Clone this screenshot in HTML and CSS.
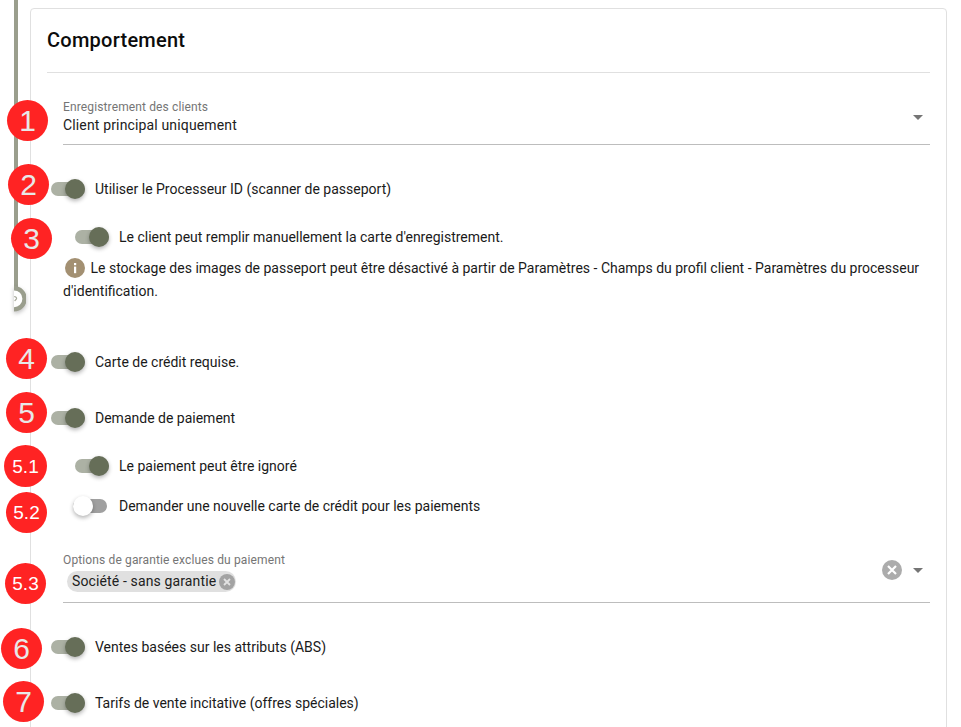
FILE: index.html
```html
<!DOCTYPE html>
<html lang="fr">
<head>
<meta charset="utf-8">
<title>Comportement</title>
<link rel="stylesheet" href="styles.css">
</head>
<body>
<div class="page">
  <div class="timeline"></div>
  <svg class="timeline-node" viewBox="0 0 12 26" width="12" height="26"><path d="M0 2.2a10.4 10.4 0 0 1 0 21.2" fill="#fff" stroke="#9a9e8d" stroke-width="4.4"/><path d="M0.2 10.6a2 2 0 0 1 2.4 1.6c0 1.4-1.4 1.6-1.8 3" fill="none" stroke="#a8ab9d" stroke-width="1.2"/></svg>

  <section class="card">
    <h2 class="title">Comportement</h2>

    <div class="field field-select">
      <div class="field-text">
        <div class="field-label">Enregistrement des clients</div>
        <div class="field-value">Client principal uniquement</div>
      </div>
      <span class="arrow"></span>
    </div>

    <label class="row row-a"><span class="switch on"><span class="thumb"></span></span><span>Utiliser le Processeur ID (scanner de passeport)</span></label>
    <label class="row row-b nested"><span class="switch on"><span class="thumb"></span></span><span>Le client peut remplir manuellement la carte d'enregistrement.</span></label>

    <p class="info">
      <svg class="info-icon" viewBox="0 0 20 20" width="20" height="20"><circle cx="10" cy="10" r="10" fill="#a39072"/><rect x="9" y="8.6" width="2.2" height="6.6" fill="#fff"/><rect x="9" y="5" width="2.2" height="2.2" fill="#fff"/></svg>
      Le stockage des images de passeport peut être désactivé à partir de Paramètres - Champs du profil client - Paramètres du processeur d'identification.
    </p>

    <label class="row row-c"><span class="switch on"><span class="thumb"></span></span><span>Carte de crédit requise.</span></label>
    <label class="row row-d"><span class="switch on"><span class="thumb"></span></span><span>Demande de paiement</span></label>
    <label class="row row-e nested"><span class="switch on"><span class="thumb"></span></span><span>Le paiement peut être ignoré</span></label>
    <label class="row row-f nested"><span class="switch"><span class="thumb"></span></span><span>Demander une nouvelle carte de crédit pour les paiements</span></label>

    <div class="field field-chips">
      <div class="field-text">
        <div class="field-label">Options de garantie exclues du paiement</div>
        <div class="chip">Société - sans garantie
          <svg class="chip-x" viewBox="0 0 16 16" width="16" height="16"><circle cx="8" cy="8" r="8" fill="#a3a3a3"/><path d="M5 5l6 6M11 5l-6 6" stroke="#e3e3e3" stroke-width="1.8"/></svg>
        </div>
      </div>
      <svg class="clear" viewBox="0 0 20 20" width="20" height="20"><circle cx="10" cy="10" r="10" fill="#acacac"/><path d="M6 6l8 8M14 6l-8 8" stroke="#fff" stroke-width="2.2"/></svg>
      <span class="arrow"></span>
    </div>

    <label class="row row-g"><span class="switch on"><span class="thumb"></span></span><span>Ventes basées sur les attributs (ABS)</span></label>
    <label class="row row-h"><span class="switch on"><span class="thumb"></span></span><span>Tarifs de vente incitative (offres spéciales)</span></label>
  </section>

  <span class="badge b1">1</span>
  <span class="badge b2">2</span>
  <span class="badge b3">3</span>
  <span class="badge b4">4</span>
  <span class="badge b5">5</span>
  <span class="badge small b51">5.1</span>
  <span class="badge small b52">5.2</span>
  <span class="badge small b53">5.3</span>
  <span class="badge b6">6</span>
  <span class="badge b7">7</span>
</div>
</body>
</html>
```

FILE: styles.css
```css
* { box-sizing: border-box; }
html, body { margin: 0; height: 100%; overflow: hidden; background: #fff; }
body { font-family: Roboto, "Liberation Sans", sans-serif; color: #1a1a1a; font-size: 14px; }

.page { position: relative; height: 727px; overflow: hidden; padding: 8px 14px 0 30px; }

.card {
  background: #fff;
  border: 1px solid #e0e0e0;
  border-radius: 4px;
  padding: 16px 16px 0;
  height: 760px;
}

.title {
  margin: 0;
  font-size: 20px;
  font-weight: 500;
  letter-spacing: .25px;
  line-height: 30px;
  height: 48px;
  color: #0c0c0c;
  border-bottom: 1px solid #e0e0e0;
}

.field {
  display: flex;
  align-items: flex-start;
  margin-left: 16px;
  border-bottom: 1px solid #bdbdbd;
}
.field-text { flex: 1; }
.field-select { margin-top: 26px; height: 46px; padding: 1px 7px 0 0; }
.field-label { font-size: 12px; line-height: 14px; letter-spacing: .13px; color: #757575; }
.field-value { font-size: 14px; line-height: 20px; margin-top: 1px; letter-spacing: .15px; color: #212121; }
.field-select .arrow { margin-top: 15px; }

.arrow {
  width: 0;
  height: 0;
  border-left: 5px solid transparent;
  border-right: 5px solid transparent;
  border-top: 5px solid #757575;
}

.row { display: flex; align-items: center; height: 24px; line-height: 24px; color: #1a1a1a; }
.nested { padding-left: 24px; }
.switch { position: relative; flex: none; width: 34px; height: 14px; margin: 0 12px 0 2px; border-radius: 7px; background: #a0a0a0; }
.switch.on { margin: 0 10px 0 4px; background: #acb1a4; }
.thumb {
  position: absolute;
  top: -3px;
  left: 0;
  width: 20px;
  height: 20px;
  border-radius: 50%;
  background: #fff;
  box-shadow: 0 2px 4px rgba(0, 0, 0, .3);
}
.switch.on .thumb { left: 14px; background: #666e58; }

.row-a { margin-top: 32px; }
.row-b { margin-top: 24px; }
.row-c { margin-top: 47px; }
.row-d { margin-top: 32px; }
.row-e { margin-top: 24px; }
.row-f { margin-top: 16px; }
.row-g { margin-top: 32px; }
.row-h { margin-top: 32px; }

.info { margin: 8px 0 0 16px; line-height: 23px; color: #1a1a1a; padding-right: 4px; height: 46px; }
.info-icon { vertical-align: -5px; margin: 0 2px 0 2px; }

.field-chips { margin-top: 33px; height: 52px; padding: 2px 7px 0 0; }
.chip {
  display: inline-flex;
  align-items: center;
  height: 21px;
  margin: 4px 0 0 4px;
  padding: 0 1px 0 5px;
  border-radius: 11px;
  background: #e0e0e0;
  color: #212121;
  letter-spacing: .13px;
  line-height: 21px;
}
.chip-x { margin-left: 3px; }
.clear { margin: 7px 11px 0 0; }
.field-chips .arrow { margin-top: 15px; }

.timeline { position: absolute; left: 14px; top: 0; width: 4px; height: 290px; background: #9a9e8d; }
.timeline-node {
  position: absolute;
  left: 14px;
  top: 286px;
  filter: drop-shadow(0 2px 2px rgba(0, 0, 0, .25));
}

.badge {
  position: absolute;
  width: 41px;
  height: 41px;
  border-radius: 50%;
  background: #ff2323;
  color: #e8e8e8;
  display: flex;
  align-items: center;
  justify-content: center;
  font-family: "Liberation Sans", Arial, sans-serif;
  font-size: 30px;
  line-height: 1;
}
.badge.small { font-size: 19px; color: #fff; }
.b1 { left: 7px; top: 100px; }
.b2 { left: 8px; top: 164px; }
.b3 { left: 11px; top: 218px; }
.b4 { left: 6px; top: 338px; }
.b5 { left: 6px; top: 392px; }
.b51 { left: 4px; top: 445px; width: 43px; height: 42px; }
.b52 { left: 6px; top: 492px; }
.b53 { left: 5px; top: 563px; }
.b6 { left: 1px; top: 628px; }
.b7 { left: 3px; top: 681px; }
```
